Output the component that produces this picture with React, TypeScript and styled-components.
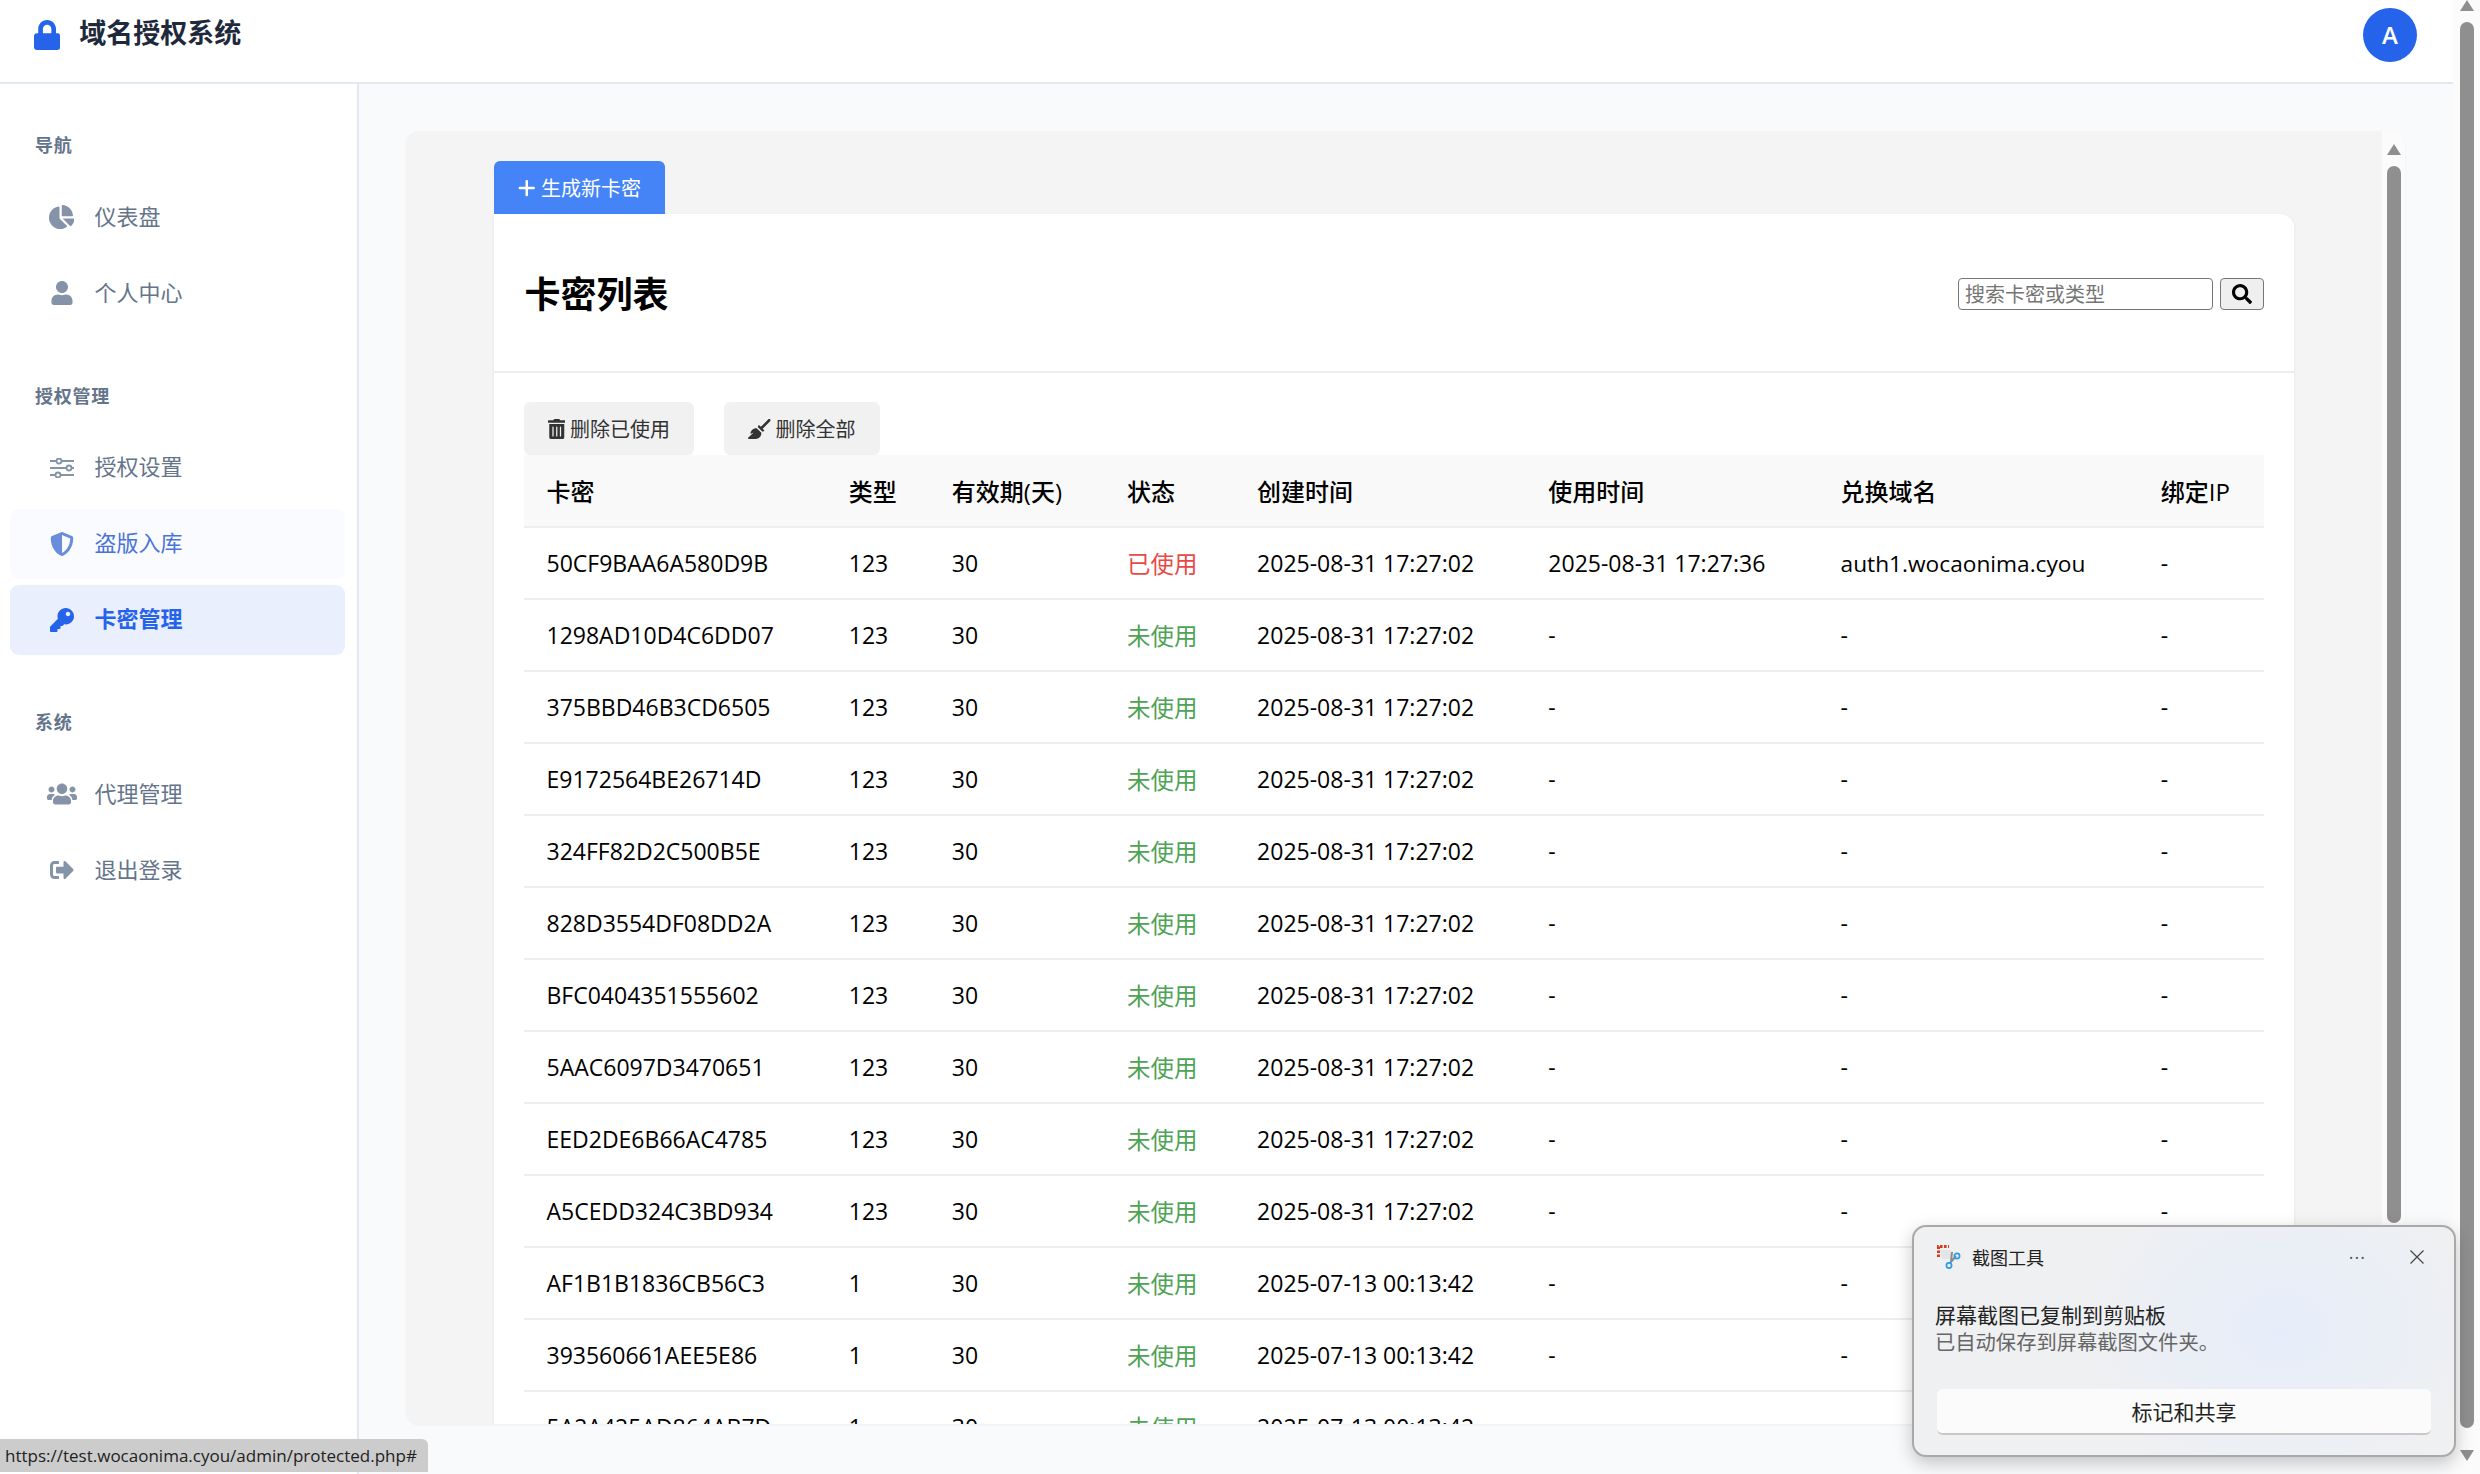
import React from "react";
import styled, { createGlobalStyle } from "styled-components";
import {
    FaChartPie,
    FaKey,
    FaLock,
    FaSearch,
    FaShieldAlt,
    FaSignOutAlt,
    FaTrashAlt,
    FaUser,
    FaUsers,
} from "react-icons/fa";
import { FaBroom, FaPlus } from "react-icons/fa6";

const GlobalStyle = createGlobalStyle`
    html, body {
        margin: 0;
        height: 100%;
        overflow: hidden;
        background: #fff;
    }
    * {
        box-sizing: border-box;
    }
    #root {
        height: 100%;
    }
    body {
        font-family: "Open Sans", "Noto Sans CJK SC", sans-serif;
    }
`;

// react-icons forces a square box, the glyphs here keep their own width
const LockIcon = styled(FaLock)`
    width: 26.25px;
    height: 30px;
`;

const PieIcon = styled(FaChartPie)`
    width: 25.5px;
`;

const UsersIcon = styled(FaUsers)`
    width: 30px;
`;

const PlusIcon = styled(FaPlus)`
    width: 17.5px;
    flex: none;
`;

const TrashIcon = styled(FaTrashAlt)`
    width: 17.5px;
    flex: none;
`;

const BroomIcon = styled(FaBroom)`
    width: 22.5px;
    flex: none;
`;

const Page = styled.div`
    position: relative;
    display: flex;
    width: 2480px;
    height: 1474px;
    overflow: hidden;
`;

const Shell = styled.div`
    flex: 1;
    min-width: 0;
    display: flex;
    flex-direction: column;
`;

const Header = styled.header`
    height: 84px;
    flex: none;
    display: flex;
    align-items: center;
    justify-content: space-between;
    padding: 0 36px 13px 34px;
    background: #fff;
    border-bottom: 2px solid #e2e8f0;
`;

const Brand = styled.div`
    display: flex;
    align-items: center;
    gap: 19px;
    color: #2563eb;
`;

const BrandName = styled.span`
    font-size: 27px;
    font-weight: 700;
    color: #1e293b;
    line-height: 32px;
    margin-bottom: 4px;
`;

const Avatar = styled.div`
    width: 54px;
    height: 54px;
    border-radius: 50%;
    background: #2563eb;
    color: #fff;
    font-size: 24px;
    font-weight: 600;
    display: flex;
    align-items: center;
    justify-content: center;
`;

const Body = styled.div`
    flex: 1;
    min-height: 0;
    display: flex;
`;

const Sidebar = styled.aside`
    width: 359px;
    flex: none;
    padding: 46px 12px 0 10px;
    background: #fff;
    border-right: 2px solid #e2e8f0;
    display: flex;
    flex-direction: column;
    gap: 52.5px;
`;

const NavSection = styled.section`
    display: flex;
    flex-direction: column;
    gap: 6px;
`;

const NavTitle = styled.h4`
    margin: 0 0 19px;
    padding: 3px 0 0 25px;
    height: 27px;
    font-size: 18px;
    line-height: 24px;
    font-weight: 600;
    letter-spacing: 0.75px;
    color: #64748b;
`;

type NavState = "idle" | "hover" | "active";

const navBackground: Record<NavState, string> = {
    idle: "transparent",
    hover: "#fafbff",
    active: "#e9effc",
};

const navColor: Record<NavState, string> = {
    idle: "#64748b",
    hover: "#4b74d6",
    active: "#2563eb",
};

const iconColor: Record<NavState, string> = {
    idle: "#8593a8",
    hover: "#6a8ddb",
    active: "#2563eb",
};

const NavItem = styled.a<{ $state: NavState }>`
    height: 70px;
    display: flex;
    align-items: center;
    gap: 18px;
    padding-left: 36.5px;
    border-radius: 9px;
    font-size: 22px;
    font-weight: ${(p) => (p.$state === "active" ? 600 : 400)};
    color: ${(p) => navColor[p.$state]};
    background: ${(p) => navBackground[p.$state]};
    text-decoration: none;
`;

const NavIcon = styled.span<{ $state: NavState }>`
    width: 30px;
    flex: none;
    display: flex;
    justify-content: center;
    font-size: 24px;
    color: ${(p) => iconColor[p.$state]};
`;

const NavLabel = styled.span`
    margin-bottom: 5px;
`;

const Main = styled.main`
    flex: 1;
    min-width: 0;
    background: #f8fafc;
    padding: 47px 48px 50px 46.5px;
    display: flex;
`;

const Panel = styled.div`
    flex: 1;
    min-width: 0;
    display: flex;
    border-radius: 14px;
    overflow: hidden;
    background: #f4f4f4;
    box-shadow: 0 1px 3px rgba(0, 0, 0, 0.05);
`;

const Frame = styled.div`
    flex: 1;
    min-width: 0;
    overflow: hidden;
    padding: 30px 88px 0 88px;
    background: #f4f4f4;
`;

const PrimaryButton = styled.button`
    height: 53px;
    width: 171px;
    display: flex;
    align-items: center;
    gap: 6px;
    padding: 0 0 0 24px;
    border: none;
    border-radius: 6px 6px 0 0;
    background: #4484f6;
    color: #fff;
    font-family: inherit;
    font-size: 20px;
`;

const Card = styled.div`
    background: #fff;
    border-radius: 0 14px 0 0;
    box-shadow: 0 1px 4px rgba(0, 0, 0, 0.06);
`;

const CardHeader = styled.div`
    height: 159px;
    padding: 3px 30px 0 31px;
    display: flex;
    align-items: center;
    justify-content: space-between;
    border-bottom: 2px solid #eeeeee;
`;

const CardTitle = styled.h2`
    margin: 0;
    padding-top: 2px;
    font-size: 36px;
    font-weight: 700;
    line-height: 48px;
    color: #000;
`;

const SearchForm = styled.form`
    display: flex;
    gap: 7px;
`;

const SearchInput = styled.input`
    width: 255px;
    height: 32px;
    padding: 0 6px;
    border: 1.5px solid #767676;
    border-radius: 4px;
    font-family: inherit;
    font-size: 20px;
    outline: none;
    &::placeholder {
        color: #757575;
    }
`;

const SearchButton = styled.button`
    width: 44px;
    height: 32px;
    padding: 0;
    display: flex;
    align-items: center;
    justify-content: center;
    border: 1.5px solid #767676;
    border-radius: 4px;
    background: #efefef;
    color: #000;
    font-size: 20px;
`;

const CardBody = styled.div`
    padding: 29px 30px 0;
`;

const Actions = styled.div`
    display: flex;
    gap: 30px;
`;

const GhostButton = styled.button`
    height: 53px;
    display: flex;
    align-items: center;
    gap: 5px;
    padding: 0 24px;
    border: none;
    border-radius: 6px;
    background: #f1f1f1;
    color: #333;
    font-family: inherit;
    font-size: 20px;
`;

const Table = styled.table`
    width: 100%;
    table-layout: fixed;
    border-collapse: collapse;
`;

const Col = styled.col<{ $width: number }>`
    width: ${(p) => p.$width}px;
`;

const Th = styled.th`
    height: 72px;
    padding: 0 0 0 23px;
    text-align: left;
    font-size: 24px;
    font-weight: 500;
    color: #000;
    background: #f9f9f9;
    border-bottom: 2px solid #eeeeee;
`;

const Td = styled.td`
    height: 72px;
    padding: 0 0 0 23px;
    font-size: 23px;
    color: #000;
    white-space: nowrap;
    border-bottom: 2px solid #eeeeee;
`;

const Domain = styled.span`
    font-size: 22.7px;
`;

const Status = styled.span<{ $used: boolean }>`
    font-size: 23.5px;
    color: ${(p) => (p.$used ? "#e84a47" : "#4ea354")};
`;

const Track = styled.div<{ $width: number; $inset: number }>`
    width: ${(p) => p.$width}px;
    flex: none;
    display: flex;
    flex-direction: column;
    align-items: center;
    background: #fbfbfb;
    padding-top: ${(p) => p.$inset}px;
`;

const ArrowUp = styled.div`
    width: 0;
    height: 0;
    border-left: 7.5px solid transparent;
    border-right: 7.5px solid transparent;
    border-bottom: 11px solid #8f8f8f;
`;

const ArrowDown = styled.div`
    width: 0;
    height: 0;
    margin-top: 22px;
    border-left: 7.5px solid transparent;
    border-right: 7.5px solid transparent;
    border-top: 11px solid #8f8f8f;
`;

const Thumb = styled.div<{ $height: number; $gap: number }>`
    width: 14px;
    height: ${(p) => p.$height}px;
    margin-top: ${(p) => p.$gap}px;
    border-radius: 7px;
    background: #8f8f8f;
`;

const StatusBar = styled.div`
    position: absolute;
    left: 0;
    bottom: 2px;
    width: 428px;
    height: 33px;
    padding-left: 5px;
    display: flex;
    align-items: center;
    background: #cccccc;
    border-radius: 0 6px 0 0;
    color: #222;
    font-size: 17px;
    white-space: nowrap;
`;

const Toast = styled.div`
    position: absolute;
    left: 1912px;
    top: 1225px;
    width: 544px;
    height: 232px;
    padding: 18px 23px 0;
    border: 2px solid #a9a9a9;
    border-radius: 14px;
    background: radial-gradient(ellipse 210px 170px at 68% 45%, #e6edfa 0%, rgba(230, 237, 250, 0) 100%), #eff0f1;
    box-shadow: 0 6px 18px rgba(0, 0, 0, 0.22);
`;

const ToastTop = styled.div`
    display: flex;
    align-items: center;
    gap: 11px;
    height: 24px;
    color: #222;
    font-size: 18px;
`;

const ToastTool = styled.span`
    flex: 1;
`;

const ToastDots = styled.span`
    font-size: 18px;
    line-height: 12px;
    letter-spacing: 1px;
    color: #555;
    margin-right: 33px;
`;

const ToastClose = styled.span`
    display: flex;
    margin-right: 7px;
`;

const ToastMessage = styled.div`
    margin: 32px 0 0 -2px;
    font-size: 21px;
    line-height: 28px;
    color: #222;
`;

const ToastHint = styled.div`
    margin-left: -2px;
    font-size: 20.3px;
    line-height: 27px;
    color: #666;
`;

const ToastAction = styled.button`
    display: block;
    width: 100%;
    height: 46px;
    margin-top: 33px;
    border: none;
    border-bottom: 2px solid #c8c8c8;
    border-radius: 6px;
    background: #fbfbfb;
    color: #222;
    font-family: inherit;
    font-size: 21px;
`;

const SlidersIcon: React.FC = () => (
    <svg width="24" height="20" viewBox="0 0 24 20" fill="#fff" stroke="currentColor">
        <path d="M0 3h24M0 10h24M0 17h24" strokeWidth="2.2" fill="none" />
        <circle cx="9" cy="3" r="2.5" strokeWidth="1.8" />
        <circle cx="19" cy="10" r="2.5" strokeWidth="1.8" />
        <circle cx="8" cy="17" r="2.5" strokeWidth="1.8" />
    </svg>
);

const navGroups: { title: string; items: { label: string; icon: React.ReactNode; state: NavState }[] }[] = [
    {
        title: "导航",
        items: [
            { label: "仪表盘", icon: <PieIcon />, state: "idle" },
            { label: "个人中心", icon: <FaUser />, state: "idle" },
        ],
    },
    {
        title: "授权管理",
        items: [
            { label: "授权设置", icon: <SlidersIcon />, state: "idle" },
            { label: "盗版入库", icon: <FaShieldAlt />, state: "hover" },
            { label: "卡密管理", icon: <FaKey />, state: "active" },
        ],
    },
    {
        title: "系统",
        items: [
            { label: "代理管理", icon: <UsersIcon />, state: "idle" },
            { label: "退出登录", icon: <FaSignOutAlt />, state: "idle" },
        ],
    },
];

const columns: [string, number][] = [
    ["卡密", 302],
    ["类型", 103],
    ["有效期(天)", 175],
    ["状态", 130],
    ["创建时间", 291],
    ["使用时间", 292],
    ["兑换域名", 320],
    ["绑定IP", 126],
];

const newBatch = "2025-08-31 17:27:02";
const oldBatch = "2025-07-13 00:13:42";

const cards = [
    { code: "50CF9BAA6A580D9B", type: "123", created: newBatch, used: "2025-08-31 17:27:36", domain: "auth1.wocaonima.cyou" },
    { code: "1298AD10D4C6DD07", type: "123", created: newBatch },
    { code: "375BBD46B3CD6505", type: "123", created: newBatch },
    { code: "E9172564BE26714D", type: "123", created: newBatch },
    { code: "324FF82D2C500B5E", type: "123", created: newBatch },
    { code: "828D3554DF08DD2A", type: "123", created: newBatch },
    { code: "BFC0404351555602", type: "123", created: newBatch },
    { code: "5AAC6097D3470651", type: "123", created: newBatch },
    { code: "EED2DE6B66AC4785", type: "123", created: newBatch },
    { code: "A5CEDD324C3BD934", type: "123", created: newBatch },
    { code: "AF1B1B1836CB56C3", type: "1", created: oldBatch },
    { code: "393560661AEE5E86", type: "1", created: oldBatch },
    { code: "5A2A425AD864AB7D", type: "1", created: oldBatch },
] as { code: string; type: string; created: string; used?: string; domain?: string }[];

const SnipIcon: React.FC = () => (
    <svg width="24" height="24" viewBox="0 0 24 24" fill="none">
        <path d="M3 5h11v9H5z" fill="#e4e4e6" />
        <path d="M1.5 12V1.5H12" stroke="#d83b1f" strokeWidth="3" strokeDasharray="2.6 1.4" />
        <path d="M15 7l-1 10M19 11l-6 7" stroke="#8a8a8a" strokeWidth="2" />
        <circle cx="20" cy="11" r="2.6" stroke="#2d9be8" strokeWidth="1.7" />
        <circle cx="12" cy="20.5" r="2.6" stroke="#2d9be8" strokeWidth="1.7" />
    </svg>
);

const CloseIcon: React.FC = () => (
    <svg width="14" height="14" viewBox="0 0 14 14" stroke="#444" strokeWidth="1.2">
        <path d="M0.5 0.5l13 13M13.5 0.5l-13 13" />
    </svg>
);

export default function App() {
    return (
        <>
            <GlobalStyle />
            <Page>
                <Shell>
                    <Header>
                        <Brand>
                            <LockIcon />
                            <BrandName>域名授权系统</BrandName>
                        </Brand>
                        <Avatar>A</Avatar>
                    </Header>
                    <Body>
                        <Sidebar>
                            {navGroups.map((group) => (
                                <NavSection key={group.title}>
                                    <NavTitle>{group.title}</NavTitle>
                                    {group.items.map((item) => (
                                        <NavItem key={item.label} $state={item.state}>
                                            <NavIcon $state={item.state}>{item.icon}</NavIcon>
                                            <NavLabel>{item.label}</NavLabel>
                                        </NavItem>
                                    ))}
                                </NavSection>
                            ))}
                        </Sidebar>
                        <Main>
                            <Panel>
                                <Frame>
                                    <PrimaryButton>
                                        <PlusIcon />
                                        生成新卡密
                                    </PrimaryButton>
                                    <Card>
                                        <CardHeader>
                                            <CardTitle>卡密列表</CardTitle>
                                            <SearchForm>
                                                <SearchInput placeholder="搜索卡密或类型" />
                                                <SearchButton type="button">
                                                    <FaSearch />
                                                </SearchButton>
                                            </SearchForm>
                                        </CardHeader>
                                        <CardBody>
                                            <Actions>
                                                <GhostButton>
                                                    <TrashIcon />
                                                    删除已使用
                                                </GhostButton>
                                                <GhostButton>
                                                    <BroomIcon />
                                                    删除全部
                                                </GhostButton>
                                            </Actions>
                                            <Table>
                                                <colgroup>
                                                    {columns.map(([name, width]) => (
                                                        <Col key={name} $width={width} />
                                                    ))}
                                                </colgroup>
                                                <thead>
                                                    <tr>
                                                        {columns.map(([name]) => (
                                                            <Th key={name}>{name}</Th>
                                                        ))}
                                                    </tr>
                                                </thead>
                                                <tbody>
                                                    {cards.map((card) => (
                                                        <tr key={card.code}>
                                                            <Td>{card.code}</Td>
                                                            <Td>{card.type}</Td>
                                                            <Td>30</Td>
                                                            <Td>
                                                                <Status $used={!!card.used}>{card.used ? "已使用" : "未使用"}</Status>
                                                            </Td>
                                                            <Td>{card.created}</Td>
                                                            <Td>{card.used ?? "-"}</Td>
                                                            <Td>{card.domain ? <Domain>{card.domain}</Domain> : "-"}</Td>
                                                            <Td>-</Td>
                                                        </tr>
                                                    ))}
                                                </tbody>
                                            </Table>
                                        </CardBody>
                                    </Card>
                                </Frame>
                                <Track $width={23} $inset={13}>
                                    <ArrowUp />
                                    <Thumb $height={1057} $gap={11} />
                                    <ArrowDown />
                                </Track>
                            </Panel>
                        </Main>
                    </Body>
                </Shell>
                <Track $width={27} $inset={0}>
                    <ArrowUp />
                    <Thumb $height={1406} $gap={11} />
                    <ArrowDown />
                </Track>
                <StatusBar>https://test.wocaonima.cyou/admin/protected.php#</StatusBar>
                <Toast>
                    <ToastTop>
                        <SnipIcon />
                        <ToastTool>截图工具</ToastTool>
                        <ToastDots>···</ToastDots>
                        <ToastClose>
                            <CloseIcon />
                        </ToastClose>
                    </ToastTop>
                    <ToastMessage>屏幕截图已复制到剪贴板</ToastMessage>
                    <ToastHint>已自动保存到屏幕截图文件夹。</ToastHint>
                    <ToastAction>标记和共享</ToastAction>
                </Toast>
            </Page>
        </>
    );
}
